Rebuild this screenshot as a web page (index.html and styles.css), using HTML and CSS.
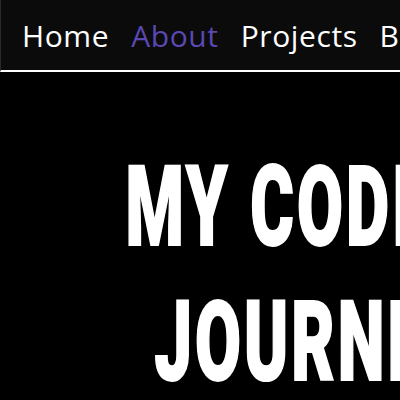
FILE: index.html
```html
<!DOCTYPE html>
<html lang="en">
<head>
<meta charset="utf-8">
<title>My Coding Journey</title>
<link rel="stylesheet" href="styles.css">
</head>
<body>
<header class="site-header">
  <nav class="nav">
    <a class="nav-link" href="#">Home</a>
    <a class="nav-link active" href="#">About</a>
    <a class="nav-link" href="#">Projects</a>
    <a class="nav-link" href="#">Blog</a>
    <a class="nav-link" href="#">Contact</a>
  </nav>
</header>
<main class="hero">
  <h1 class="hero-title">MY CODING<br>JOURNEY</h1>
</main>
</body>
</html>
```
FILE: styles.css
```css
html, body {
  margin: 0;
  padding: 0;
  background: #000;
  overflow: hidden;
}
.site-header {
  height: 70px;
  background: #0b0b0b;
  border-left: 1px solid #2a2a2a;
  border-bottom: 2px solid #fff;
  overflow: hidden;
}
.nav {
  display: flex;
  align-items: center;
  height: 100%;
  gap: 22px;
  padding-left: 21px;
  white-space: nowrap;
}
.nav-link {
  font-family: "Open Sans", sans-serif;
  font-weight: 500;
  font-size: 30px;
  letter-spacing: 0.6px;
  color: #fff;
  text-decoration: none;
}
.nav-link.active {
  color: #5a48b3;
}
.hero {
  width: 627px;
  padding-top: 68px;
}
.hero-title {
  margin: 0;
  font-family: Roboto, "Liberation Sans", sans-serif;
  font-weight: 900;
  font-size: 111px;
  line-height: 135px;
  letter-spacing: 5px;
  color: #fff;
  -webkit-text-stroke: 2px #fff;
  text-align: center;
  white-space: nowrap;
  transform: scaleX(0.6);
}
```
